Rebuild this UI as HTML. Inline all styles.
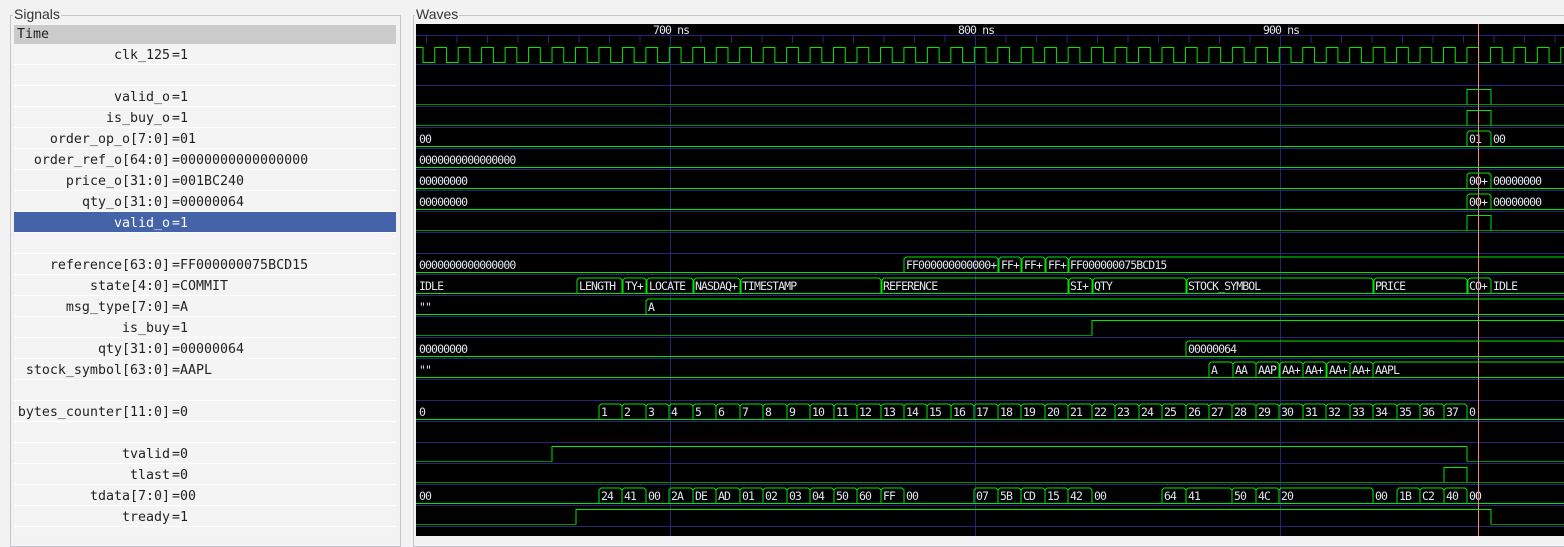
<!DOCTYPE html>
<html><head><meta charset="utf-8"><style>
html,body{margin:0;padding:0;width:1564px;height:536px;overflow:hidden;background:#f2f2f3;font-family:"Liberation Sans","DejaVu Sans",sans-serif;}
.frame{position:absolute;border:1px solid #c6c6ca;}
.flab{position:absolute;background:#f2f2f3;font-size:14px;color:#333;padding:0 1px;line-height:14px;}
#list{position:absolute;left:14px;top:24px;width:382px;height:512px;background:#f4f4f4;}
.row{position:absolute;left:0;width:382px;height:21px;border-bottom:1px solid #fff;box-sizing:border-box;font-family:"DejaVu Sans Mono","Liberation Mono",monospace;font-size:13.3px;color:#222;}
.n{position:absolute;right:226px;top:4px;white-space:pre}
.v{position:absolute;left:158px;top:4px;white-space:pre}
#w{position:absolute;left:416px;top:24px}
</style></head><body>
<div class="frame" style="left:10px;top:15px;width:389px;height:530px"></div>
<div class="flab" style="left:13px;top:7px">Signals</div>
<div class="frame" style="left:413px;top:15px;width:1160px;height:530px"></div>
<div class="flab" style="left:415px;top:7px">Waves</div>
<div id="list">
<div class="row" style="top:1px;height:19px;background:#cbcbcb;border:none"><span style="position:absolute;left:3px;top:2px">Time</span></div>
<div class="row" style="top:20px"><span class="n">clk_125</span><span class="v">=1</span></div>
<div class="row" style="top:41px"></div>
<div class="row" style="top:62px"><span class="n">valid_o</span><span class="v">=1</span></div>
<div class="row" style="top:83px"><span class="n">is_buy_o</span><span class="v">=1</span></div>
<div class="row" style="top:104px"><span class="n">order_op_o[7:0]</span><span class="v">=01</span></div>
<div class="row" style="top:125px"><span class="n">order_ref_o[64:0]</span><span class="v">=0000000000000000</span></div>
<div class="row" style="top:146px"><span class="n">price_o[31:0]</span><span class="v">=001BC240</span></div>
<div class="row" style="top:167px"><span class="n">qty_o[31:0]</span><span class="v">=00000064</span></div>
<div class="row" style="top:188px;background:#4463a8;color:#fff"><span class="n">valid_o</span><span class="v">=1</span></div>
<div class="row" style="top:209px"></div>
<div class="row" style="top:230px"><span class="n">reference[63:0]</span><span class="v">=FF000000075BCD15</span></div>
<div class="row" style="top:251px"><span class="n">state[4:0]</span><span class="v">=COMMIT</span></div>
<div class="row" style="top:272px"><span class="n">msg_type[7:0]</span><span class="v">=A</span></div>
<div class="row" style="top:293px"><span class="n">is_buy</span><span class="v">=1</span></div>
<div class="row" style="top:314px"><span class="n">qty[31:0]</span><span class="v">=00000064</span></div>
<div class="row" style="top:335px"><span class="n">stock_symbol[63:0]</span><span class="v">=AAPL</span></div>
<div class="row" style="top:356px"></div>
<div class="row" style="top:377px"><span class="n">bytes_counter[11:0]</span><span class="v">=0</span></div>
<div class="row" style="top:398px"></div>
<div class="row" style="top:419px"><span class="n">tvalid</span><span class="v">=0</span></div>
<div class="row" style="top:440px"><span class="n">tlast</span><span class="v">=0</span></div>
<div class="row" style="top:461px"><span class="n">tdata[7:0]</span><span class="v">=00</span></div>
<div class="row" style="top:482px"><span class="n">tready</span><span class="v">=1</span></div>
</div>
<svg id="w" width="1148" height="512" viewBox="416 24 1148 512" xmlns="http://www.w3.org/2000/svg">
<style>
.g{stroke:#25257a;stroke-width:1;fill:none}
.b{stroke:#00e800;stroke-width:1;fill:none}
.d{stroke:#009000;stroke-width:1;fill:none}
text{font-family:"DejaVu Sans Mono","Liberation Mono",monospace;font-size:11.5px;letter-spacing:-0.9px;fill:#dfe6ee}
</style>
<rect x="416" y="24" width="1148" height="512" fill="#000"/>
<path class="g" d="M416,35.5H1564M416,64.5H1564M416,85.5H1564M416,106.5H1564M416,127.5H1564M416,148.5H1564M416,169.5H1564M416,190.5H1564M416,211.5H1564M416,232.5H1564M416,253.5H1564M416,274.5H1564M416,295.5H1564M416,316.5H1564M416,337.5H1564M416,358.5H1564M416,379.5H1564M416,400.5H1564M416,421.5H1564M416,442.5H1564M416,463.5H1564M416,484.5H1564M416,505.5H1564M416,526.5H1564"/>
<path class="g" d="M670.5,35V536M975.5,35V536M1280.5,35V536"/>
<path class="g" d="M426.5,35v8m30.5,-8v8m30.5,-8v8m30.5,-8v8m30.5,-8v8m30.5,-8v8m30.5,-8v8m30.5,-8v8m30.5,-8v8m30.5,-8v8m30.5,-8v8m30.5,-8v8m30.5,-8v8m30.5,-8v8m30.5,-8v8m30.5,-8v8m30.5,-8v8m30.5,-8v8m30.5,-8v8m30.5,-8v8m30.5,-8v8m30.5,-8v8m30.5,-8v8m30.5,-8v8m30.5,-8v8m30.5,-8v8m30.5,-8v8m30.5,-8v8m30.5,-8v8m30.5,-8v8m30.5,-8v8m30.5,-8v8m30.5,-8v8m30.5,-8v8m30.5,-8v8m30.5,-8v8m30.5,-8v8m30.5,-8v8"/>
<text x="653" y="34">700 ns</text><text x="958" y="34">800 ns</text><text x="1263" y="34">900 ns</text>
<path class="b" d="M416,47.5H423v15h11.73v-15h11.73v15h11.73v-15h11.73v15h11.73v-15h11.73v15h11.73v-15h11.73v15h11.73v-15h11.73v15h11.73v-15h11.73v15h11.73v-15h11.73v15h11.73v-15h11.73v15h11.73v-15h11.73v15h11.73v-15h11.73v15h11.73v-15h11.73v15h11.73v-15h11.73v15h11.73v-15h11.73v15h11.73v-15h11.73v15h11.73v-15h11.73v15h11.73v-15h11.73v15h11.73v-15h11.73v15h11.73v-15h11.73v15h11.73v-15h11.73v15h11.73v-15h11.73v15h11.73v-15h11.73v15h11.73v-15h11.73v15h11.73v-15h11.73v15h11.73v-15h11.73v15h11.73v-15h11.73v15h11.73v-15h11.73v15h11.73v-15h11.73v15h11.73v-15h11.73v15h11.73v-15h11.73v15h11.73v-15h11.73v15h11.73v-15h11.73v15h11.73v-15h11.73v15h11.73v-15h11.73v15h11.73v-15h11.73v15h11.73v-15h11.73v15h11.73v-15h11.73v15h11.73v-15h11.73v15h11.73v-15h11.73v15h11.73v-15h11.73v15h11.73v-15h11.73v15h11.73v-15h11.73v15h11.73v-15h11.73v15h11.73v-15h11.73v15h11.73v-15h11.73v15h11.73v-15h11.73v15h11.73v-15h11.73v15h11.73v-15h11.73v15h11.73v-15h11.73v15h11.73v-15h11.73v15h11.73v-15h11.73v15h11.73v-15h11.73v15h11.73v-15h11.73"/>
<path class="d" d="M416,104.5H1564M416,125.5H1564M416,230.5H1564M416,335.5H1092M416,461.5H552M1467,461.5H1564M416,482.5H1564M416,524.5H576M1491,524.5H1564"/>
<path class="b" d="M1467,104.5V89.5H1491V104.5M1467,125.5V110.5H1491V125.5M1467,230.5V215.5H1491V230.5M1092,335.5V320.5H1564M552,461.5V446.5H1467V461.5M1444,482.5V467.5H1467V482.5M576,524.5V509.5H1491V524.5"/>
<path class="b" d="M416,146.5H1564M416,167.5H1564M416,188.5H1564M416,209.5H1564M416,272.5H1564M416,293.5H1564M416,314.5H1564M416,356.5H1564M416,377.5H1564M416,419.5H1564M416,503.5H1564"/>
<path class="b" d="
M1467,146V133l2,-2H1489l2,2V146
M1467,188V175l2,-2H1489l2,2V188
M1467,209V196l2,-2H1489l2,2V209
M904,272V259l2,-2H996l2,2V272 M999,272V259l2,-2H1019l2,2V272 M1022,272V259l2,-2H1043l2,2V272 M1046,272V259l2,-2H1066l2,2V272 M1069,272V259l2,-2H1564
M577,293V280l2,-2H620l2,2V293 M623,293V280l2,-2H644l2,2V293 M647,293V280l2,-2H691l2,2V293 M694,293V280l2,-2H738l2,2V293 M741,293V280l2,-2H879l2,2V293 M882,293V280l2,-2H1066l2,2V293 M1069,293V280l2,-2H1090l2,2V293 M1093,293V280l2,-2H1184l2,2V293 M1187,293V280l2,-2H1371l2,2V293 M1374,293V280l2,-2H1465l2,2V293 M1468,293V280l2,-2H1489l2,2V293
M646,314V301l2,-2H1564
M1186,356V343l2,-2H1564
M1209,377V364l2,-2H1231l2,2V377 M1233,377V364l2,-2H1254l2,2V377 M1256,377V364l2,-2H1277l2,2V377 M1280,377V364l2,-2H1301l2,2V377 M1303,377V364l2,-2H1324l2,2V377 M1327,377V364l2,-2H1348l2,2V377 M1350,377V364l2,-2H1371l2,2V377 M1373,377V364l2,-2H1564
"/>
<path class="b" d="M599,419V406l2,-2H620l2,2V419 M622,419V406l2,-2H644l2,2V419 M646,419V406l2,-2H667l2,2V419 M669,419V406l2,-2H691l2,2V419 M693,419V406l2,-2H714l2,2V419 M716,419V406l2,-2H738l2,2V419 M740,419V406l2,-2H761l2,2V419 M763,419V406l2,-2H785l2,2V419 M787,419V406l2,-2H808l2,2V419 M810,419V406l2,-2H832l2,2V419 M834,419V406l2,-2H855l2,2V419 M857,419V406l2,-2H879l2,2V419 M881,419V406l2,-2H902l2,2V419 M904,419V406l2,-2H925l2,2V419 M927,419V406l2,-2H949l2,2V419 M951,419V406l2,-2H972l2,2V419 M974,419V406l2,-2H996l2,2V419 M998,419V406l2,-2H1019l2,2V419 M1021,419V406l2,-2H1043l2,2V419 M1045,419V406l2,-2H1066l2,2V419 M1068,419V406l2,-2H1090l2,2V419 M1092,419V406l2,-2H1113l2,2V419 M1115,419V406l2,-2H1137l2,2V419 M1139,419V406l2,-2H1160l2,2V419 M1162,419V406l2,-2H1184l2,2V419 M1186,419V406l2,-2H1207l2,2V419 M1209,419V406l2,-2H1230l2,2V419 M1232,419V406l2,-2H1254l2,2V419 M1256,419V406l2,-2H1277l2,2V419 M1279,419V406l2,-2H1301l2,2V419 M1303,419V406l2,-2H1324l2,2V419 M1326,419V406l2,-2H1348l2,2V419 M1350,419V406l2,-2H1371l2,2V419 M1373,419V406l2,-2H1395l2,2V419 M1397,419V406l2,-2H1418l2,2V419 M1420,419V406l2,-2H1442l2,2V419 M1444,419V406l2,-2H1465l2,2V419
M599,503V490l2,-2H620l2,2V503 M622,503V490l2,-2H644l2,2V503 M669,503V490l2,-2H691l2,2V503 M693,503V490l2,-2H714l2,2V503 M716,503V490l2,-2H738l2,2V503 M740,503V490l2,-2H761l2,2V503 M763,503V490l2,-2H785l2,2V503 M787,503V490l2,-2H808l2,2V503 M810,503V490l2,-2H832l2,2V503 M834,503V490l2,-2H855l2,2V503 M857,503V490l2,-2H879l2,2V503 M881,503V490l2,-2H902l2,2V503 M974,503V490l2,-2H996l2,2V503 M998,503V490l2,-2H1019l2,2V503 M1021,503V490l2,-2H1043l2,2V503 M1045,503V490l2,-2H1066l2,2V503 M1068,503V490l2,-2H1090l2,2V503 M1162,503V490l2,-2H1184l2,2V503 M1186,503V490l2,-2H1230l2,2V503 M1232,503V490l2,-2H1254l2,2V503 M1256,503V490l2,-2H1277l2,2V503 M1279,503V490l2,-2H1371l2,2V503 M1397,503V490l2,-2H1418l2,2V503 M1420,503V490l2,-2H1442l2,2V503 M1444,503V490l2,-2H1465l2,2V503"/>
<text x="419" y="143">00</text><text x="1469" y="143">01</text><text x="1493" y="143">00</text>
<text x="419" y="164">0000000000000000</text>
<text x="419" y="185">00000000</text><text x="1469" y="185">00+</text><text x="1493" y="185">00000000</text>
<text x="419" y="206">00000000</text><text x="1469" y="206">00+</text><text x="1493" y="206">00000000</text>
<text x="419" y="269">0000000000000000</text><text x="906" y="269">FF000000000000+</text><text x="1001" y="269">FF+</text><text x="1024" y="269">FF+</text><text x="1048" y="269">FF+</text><text x="1070" y="269">FF000000075BCD15</text>
<text x="419" y="290">IDLE</text><text x="579" y="290">LENGTH</text><text x="625" y="290">TY+</text><text x="649" y="290">LOCATE</text><text x="695" y="290">NASDAQ+</text><text x="742" y="290">TIMESTAMP</text><text x="883" y="290">REFERENCE</text><text x="1070" y="290">SI+</text><text x="1094" y="290">QTY</text><text x="1188" y="290">STOCK_SYMBOL</text><text x="1375" y="290">PRICE</text><text x="1469" y="290">CO+</text><text x="1493" y="290">IDLE</text>
<text x="419" y="311">""</text><text x="648" y="311">A</text>
<text x="419" y="353">00000000</text><text x="1188" y="353">00000064</text>
<text x="419" y="374">""</text><text x="1211" y="374">A</text><text x="1235" y="374">AA</text><text x="1258" y="374">AAP</text><text x="1282" y="374">AA+</text><text x="1305" y="374">AA+</text><text x="1329" y="374">AA+</text><text x="1352" y="374">AA+</text><text x="1375" y="374">AAPL</text>
<text x="419" y="416">0</text><text x="601" y="416">1</text><text x="624" y="416">2</text><text x="648" y="416">3</text><text x="671" y="416">4</text><text x="695" y="416">5</text><text x="718" y="416">6</text><text x="742" y="416">7</text><text x="765" y="416">8</text><text x="789" y="416">9</text><text x="812" y="416">10</text><text x="836" y="416">11</text><text x="859" y="416">12</text><text x="883" y="416">13</text><text x="906" y="416">14</text><text x="929" y="416">15</text><text x="953" y="416">16</text><text x="976" y="416">17</text><text x="1000" y="416">18</text><text x="1023" y="416">19</text><text x="1047" y="416">20</text><text x="1070" y="416">21</text><text x="1094" y="416">22</text><text x="1117" y="416">23</text><text x="1141" y="416">24</text><text x="1164" y="416">25</text><text x="1188" y="416">26</text><text x="1211" y="416">27</text><text x="1234" y="416">28</text><text x="1258" y="416">29</text><text x="1281" y="416">30</text><text x="1305" y="416">31</text><text x="1328" y="416">32</text><text x="1352" y="416">33</text><text x="1375" y="416">34</text><text x="1399" y="416">35</text><text x="1422" y="416">36</text><text x="1446" y="416">37</text><text x="1469" y="416">0</text>
<text x="419" y="500">00</text><text x="601" y="500">24</text><text x="624" y="500">41</text><text x="648" y="500">00</text><text x="671" y="500">2A</text><text x="695" y="500">DE</text><text x="718" y="500">AD</text><text x="742" y="500">01</text><text x="765" y="500">02</text><text x="789" y="500">03</text><text x="812" y="500">04</text><text x="836" y="500">50</text><text x="859" y="500">60</text><text x="883" y="500">FF</text><text x="906" y="500">00</text><text x="976" y="500">07</text><text x="1000" y="500">5B</text><text x="1023" y="500">CD</text><text x="1047" y="500">15</text><text x="1070" y="500">42</text><text x="1094" y="500">00</text><text x="1164" y="500">64</text><text x="1188" y="500">41</text><text x="1234" y="500">50</text><text x="1258" y="500">4C</text><text x="1281" y="500">20</text><text x="1375" y="500">00</text><text x="1399" y="500">1B</text><text x="1422" y="500">C2</text><text x="1446" y="500">40</text><text x="1469" y="500">00</text>
<path d="M1478.5,24V536" stroke="#ff8080" stroke-width="1"/>
</svg>
</body></html>
